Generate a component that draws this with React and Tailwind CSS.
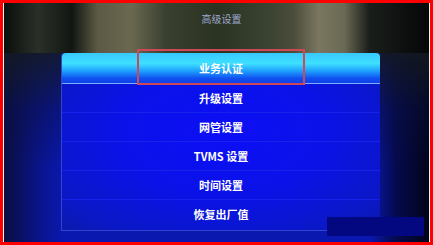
import React from "react";

const items = ["升级设置", "网管设置", "TVMS 设置", "时间设置", "恢复出厂值"];

export default function App() {
  return (
    <div className="w-[433px] h-[245px] bg-[#ff0000] pt-[3px] pl-[3px] pr-[3px] pb-[3px] font-['Noto_Sans_CJK_SC',sans-serif]">
      <div className="relative w-full h-full border-l border-r border-white overflow-hidden flex flex-col bg-[linear-gradient(90deg,#0a0e40_0%,#0a1488_8%,#0a18b0_14%,#0a18b0_86%,#050a50_92%,#020418_100%)]">
        {/* blurry photo behind the title */}
        <div className="h-[50px] shrink-0 flex items-start justify-center pt-[9px] pl-[10px] bg-[linear-gradient(90deg,#0a0e0c_0%,#2a3028_8%,#111612_16%,#5c5a44_22%,#6a6850_30%,#3a4030_38%,#2a3222_50%,#3a4232_62%,#4a4c3a_68%,#7a7660_74%,#6a6a54_80%,#1a1e1a_86%,#050608_100%)]">
          <span className="text-[10px] leading-[14px] text-[#9ea8cc]">高级设置</span>
        </div>

        <div className="flex-1 pl-[57px] bg-[linear-gradient(180deg,rgba(20,26,30,0.85)_0%,rgba(10,16,60,0.4)_30%,transparent_60%)]">
          <div className="relative w-[319px] h-[178px] rounded-t-[4px] border-l border-b border-[#3444d0] bg-[radial-gradient(ellipse_at_50%_45%,#0c0ef6_0%,#0a12e8_45%,#0a18c4_85%,#0a1aa8_100%)]">
            <div className="h-[31px] rounded-t-[4px] border-b border-[#7ab0ff] bg-[linear-gradient(180deg,#38c8ff_0%,#3ee0ff_35%,#1ea0ff_60%,#1050f0_85%,#1040e8_100%)] flex items-center justify-center">
              <span className="text-[11px] font-bold text-white">业务认证</span>
            </div>
            {items.map((t, i) => (
              <div
                key={t}
                className={
                  "h-[29px] flex items-center justify-center " +
                  (i < items.length - 1 ? "border-b border-[#1422ea]" : "")
                }
              >
                <span className="text-[11px] font-bold text-white">{t}</span>
              </div>
            ))}
            <div className="absolute left-[75px] top-[-4px] w-[168px] h-[36px] border-2 border-[#d04858]" />
          </div>
        </div>

        <div className="absolute left-[323px] top-[214px] w-[97px] h-[19px] bg-[#040880]" />
      </div>
    </div>
  );
}
